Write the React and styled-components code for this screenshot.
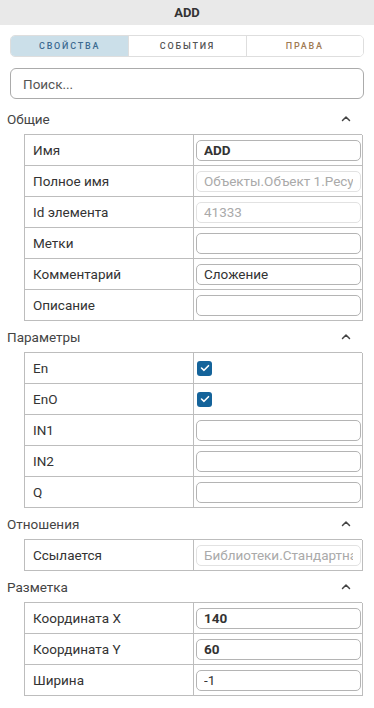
import React from 'react'
import styled, { createGlobalStyle } from 'styled-components'

const GlobalStyle = createGlobalStyle`
  html, body {
    margin: 0;
    padding: 0;
    background: #fff;
  }
  body {
    font-family: Roboto, "Liberation Sans", Arial, sans-serif;
    color: #333;
  }
  * { box-sizing: border-box; }
`

const Panel = styled.div`
  width: 374px;
  min-height: 708px;
  background: #fff;
`

const Header = styled.div`
  height: 25px;
  background: #e9e9e9;
  display: flex;
  align-items: center;
  justify-content: center;
  font-size: 13px;
  font-weight: 700;
  color: #333;
`

const Tabs = styled.div`
  margin: 10px 10px 0;
  height: 22px;
  display: grid;
  grid-template-columns: repeat(3, 1fr);
  border: 1px solid #dedede;
  border-radius: 5px;
  overflow: hidden;
`

const Tab = styled.div`
  display: flex;
  align-items: center;
  justify-content: center;
  font-size: 9px;
  font-weight: 500;
  letter-spacing: 1.8px;
  text-transform: uppercase;
  color: ${({ $color }) => $color};
  background: ${({ $active }) => ($active ? '#cbdfe9' : '#fff')};
  & + & {
    border-left: 1px solid #dedede;
  }
`

const Search = styled.input`
  display: block;
  margin: 11px 10px 0;
  width: 354px;
  height: 31px;
  border: 1px solid #ababab;
  border-radius: 6px;
  padding: 0 12px;
  font-family: inherit;
  font-size: 13.5px;
  color: #333;
  outline: none;
  &::placeholder {
    color: #555;
  }
`

const SectionHead = styled.div`
  height: 31px;
  display: flex;
  align-items: center;
  justify-content: space-between;
  padding: 0 23px 0 7px;
  font-size: 13.5px;
  color: #444;
  margin-top: ${({ $first }) => ($first ? '4px' : '0')};
`

const Grid = styled.div`
  margin: 0 0 0 24px;
  width: 338px;
  display: grid;
  grid-template-columns: 169px 169px;
  border-top: 1px solid #bdbdbd;
  border-left: 1px solid #bdbdbd;
`

const Label = styled.div`
  height: 31px;
  display: flex;
  align-items: center;
  padding-left: 8px;
  font-size: 13.5px;
  color: #333;
  border-right: 1px solid #bdbdbd;
  border-bottom: 1px solid #bdbdbd;
`

const Value = styled.div`
  height: 31px;
  display: flex;
  align-items: center;
  padding: 0 1px 0 2px;
  border-right: 1px solid #bdbdbd;
  border-bottom: 1px solid #bdbdbd;
`

const Field = styled.input`
  width: 100%;
  height: 21px;
  border: 1px solid ${({ disabled }) => (disabled ? '#e2e2e2' : '#b4b4b4')};
  border-radius: 5px;
  padding: 0 7px;
  font-family: inherit;
  font-size: 13.5px;
  font-weight: ${({ $bold }) => ($bold ? 700 : 400)};
  color: ${({ disabled }) => (disabled ? '#aaa' : '#333')};
  background: #fff;
  outline: none;
`

const Check = styled.span`
  width: 15px;
  height: 15px;
  border-radius: 3px;
  background: #14639a;
  display: flex;
  align-items: center;
  justify-content: center;
  margin-left: 1px;
`

const Caret = () => (
  <svg width="10" height="7" viewBox="0 0 10 7">
    <polyline points="1.5,5.5 5,2 8.5,5.5" fill="none" stroke="#444" strokeWidth="1.5" strokeLinecap="round" strokeLinejoin="round" />
  </svg>
)

const Tick = () => (
  <svg width="10" height="8" viewBox="0 0 10 8">
    <polyline points="1.5,4 4,6.3 8.5,1.7" fill="none" stroke="#fff" strokeWidth="1.6" strokeLinecap="round" strokeLinejoin="round" />
  </svg>
)

const sections = [
  {
    title: 'Общие',
    rows: [
      { label: 'Имя', value: 'ADD', bold: true },
      { label: 'Полное имя', value: 'Объекты.Объект 1.Ресурсы.ADD', disabled: true },
      { label: 'Id элемента', value: '41333', disabled: true },
      { label: 'Метки', value: '' },
      { label: 'Комментарий', value: 'Сложение' },
      { label: 'Описание', value: '' },
    ],
  },
  {
    title: 'Параметры',
    rows: [
      { label: 'En', check: true },
      { label: 'EnO', check: true },
      { label: 'IN1', value: '' },
      { label: 'IN2', value: '' },
      { label: 'Q', value: '' },
    ],
  },
  {
    title: 'Отношения',
    rows: [
      { label: 'Ссылается', value: 'Библиотеки.Стандартная.ADD', disabled: true },
    ],
  },
  {
    title: 'Разметка',
    rows: [
      { label: 'Координата X', value: '140', bold: true },
      { label: 'Координата Y', value: '60', bold: true },
      { label: 'Ширина', value: '-1' },
    ],
  },
]

export default function App() {
  return (
    <>
      <GlobalStyle />
      <Panel>
        <Header>ADD</Header>
        <Tabs>
          <Tab $active $color="#3d6b91">Свойства</Tab>
          <Tab $color="#555">События</Tab>
          <Tab $color="#a07a52">Права</Tab>
        </Tabs>
        <Search placeholder="Поиск..." />
        {sections.map((s, i) => (
          <div key={s.title}>
            <SectionHead $first={i === 0}>
              <span>{s.title}</span>
              <Caret />
            </SectionHead>
            <Grid>
              {s.rows.map((r) => (
                <React.Fragment key={r.label}>
                  <Label>{r.label}</Label>
                  <Value>
                    {r.check ? (
                      <Check><Tick /></Check>
                    ) : (
                      <Field
                        defaultValue={r.value}
                        disabled={r.disabled}
                        $bold={r.bold}
                      />
                    )}
                  </Value>
                </React.Fragment>
              ))}
            </Grid>
          </div>
        ))}
      </Panel>
    </>
  )
}
